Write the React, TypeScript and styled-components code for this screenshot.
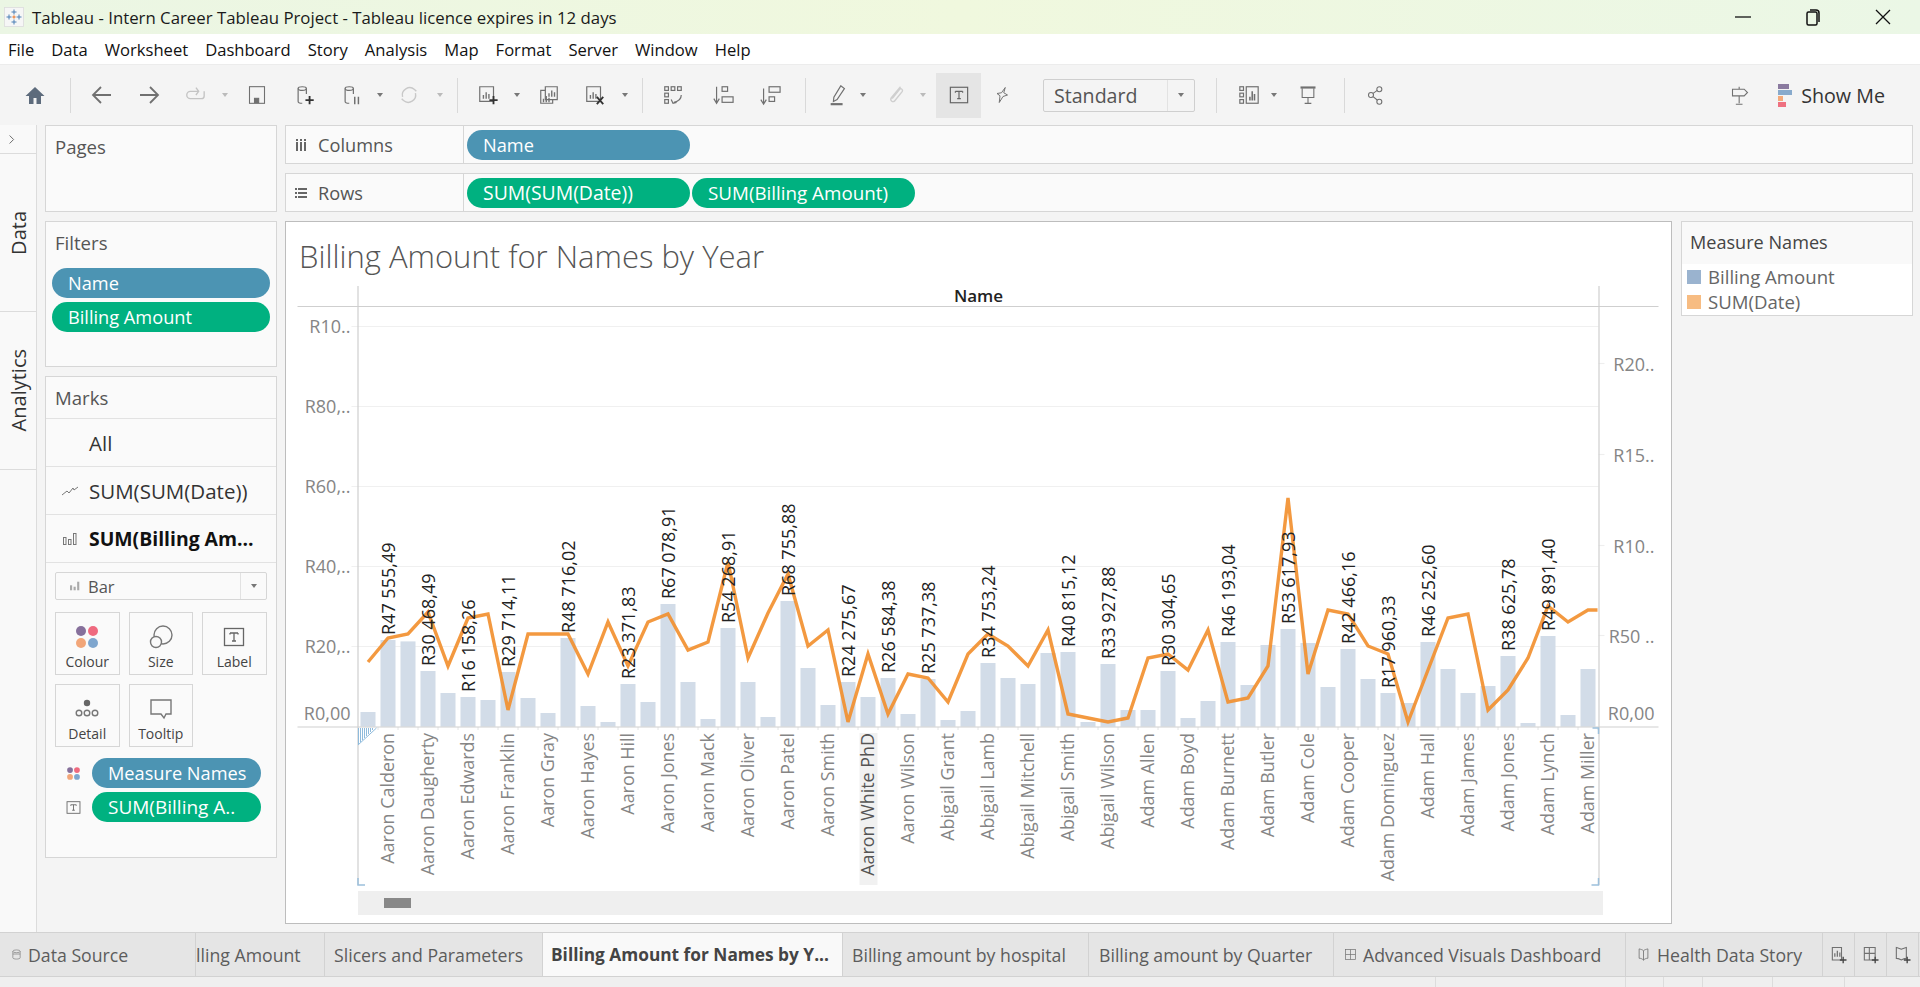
import React from 'react';
import styled, { createGlobalStyle } from 'styled-components';

const UI_FONT = '"Open Sans", "Noto Sans", "Liberation Sans", sans-serif';

const GlobalStyle = createGlobalStyle`
  html, body { margin: 0; padding: 0; height: 100%; overflow: hidden; background: #f4f4f4; }
  * { box-sizing: border-box; }
  body { font-family: ${UI_FONT}; }
`;

/* ---------- window chrome ---------- */

const Page = styled.div`
  width: 1920px;
  height: 987px;
  display: flex;
  flex-direction: column;
  background: #f4f4f4;
`;

const TitleBar = styled.div`
  height: 34px;
  display: flex;
  align-items: center;
  background: linear-gradient(90deg, #ebf6e4 0%, #f0f8de 50%, #ebf7e6 100%);
  padding: 0 2px 0 4px;
  color: #1a1a1a;
  font-size: 16.8px;
`;

const TitleText = styled.span`
  margin-left: 8px;
  flex: 1;
`;

const WindowButton = styled.div`
  width: 70px;
  height: 34px;
  display: flex;
  align-items: center;
  justify-content: center;
`;

const MenuBar = styled.div`
  height: 30px;
  display: flex;
  align-items: center;
  gap: 17px;
  padding-left: 8px;
  background: #fff;
  color: #111;
  font-size: 16.6px;
`;

const Toolbar = styled.div`
  height: 61px;
  display: flex;
  align-items: center;
  background: #f4f4f4;
  padding-right: 35px;
  border-top: 1px solid #ececec;
`;

const ToolIcon = styled.div<{ $ml: number }>`
  width: 28px;
  height: 28px;
  margin-left: ${p => p.$ml}px;
  display: flex;
  align-items: center;
  justify-content: center;
  flex: none;
`;

const Caret = styled.div<{ $ml: number; $off?: boolean }>`
  width: 0;
  height: 0;
  margin-left: ${p => p.$ml + 2}px;
  margin-right: 2px;
  border-left: 3px solid transparent;
  border-right: 3px solid transparent;
  border-top: 4px solid ${p => (p.$off ? '#bbb' : '#777')};
  flex: none;
`;

const ToolSep = styled.div<{ $ml: number }>`
  width: 1px;
  height: 35px;
  margin-left: ${p => p.$ml}px;
  background: #d9d9d9;
  flex: none;
`;

const ActiveTool = styled.div<{ $ml: number }>`
  width: 45px;
  height: 45px;
  margin-left: ${p => p.$ml}px;
  background: #e5e5e5;
  display: flex;
  align-items: center;
  justify-content: center;
  flex: none;
`;

const FitSelect = styled.div<{ $ml: number }>`
  width: 152px;
  height: 33px;
  margin-left: ${p => p.$ml}px;
  display: flex;
  align-items: center;
  border: 1.5px solid #cfcfcf;
  border-radius: 2px;
  color: #555;
  font-size: 19.6px;
  flex: none;
`;

const FitLabel = styled.div`
  flex: 1;
  padding-left: 10px;
`;

const FitArrow = styled.div`
  width: 27px;
  height: 100%;
  border-left: 1px solid #e2e2e2;
  display: flex;
  align-items: center;
  justify-content: center;
`;

const ShowMe = styled.div`
  margin-left: 24px;
  display: flex;
  align-items: center;
  gap: 9px;
  color: #333;
  font-size: 19.7px;
`;

const ToolRight = styled.div`
  margin-left: auto;
  display: flex;
  align-items: center;
`;

/* ---------- workspace ---------- */

const Workspace = styled.div`
  flex: 1;
  min-height: 0;
  display: flex;
`;

const SideStrip = styled.div`
  width: 37px;
  flex: none;
  background: #f9f9f9;
  border-right: 1px solid #dcdcdc;
  color: #333;
  font-size: 20px;
`;

const StripTop = styled.div`
  height: 29px;
  border-bottom: 1px solid #dcdcdc;
  display: flex;
  align-items: center;
  padding-left: 8px;
`;

const StripTab = styled.div`
  height: 158px;
  border-bottom: 1px solid #dcdcdc;
  display: flex;
  align-items: center;
  justify-content: center;
`;

const StripLabel = styled.span`
  writing-mode: vertical-rl;
  transform: rotate(180deg);
`;

const LeftPanel = styled.div`
  width: 232px;
  margin-left: 8px;
  flex: none;
  display: flex;
  flex-direction: column;
  gap: 9px;
  padding-bottom: 74px;
`;

const Card = styled.div<{ $h?: number }>`
  ${p => (p.$h ? `height: ${p.$h}px;` : 'flex: 1;')}
  background: #fafafa;
  border: 1.5px solid #d6d6d6;
  min-height: 0;
`;

const CardTitle = styled.div<{ $h?: number }>`
  padding: 8px 0 0 9px;
  height: ${p => p.$h ?? 43}px;
  color: #555;
  font-size: 18.6px;
`;

const Pill = styled.div<{ $kind: 'dim' | 'mea'; $w?: number; $fs?: number }>`
  height: 30px;
  ${p => (p.$w ? `width: ${p.$w}px;` : '')}
  border-radius: 15px;
  padding-left: 16px;
  display: flex;
  align-items: center;
  color: #fff;
  font-size: ${p => p.$fs ?? 18.2}px;
  white-space: nowrap;
  flex: none;
  background: ${p => (p.$kind === 'dim' ? '#4c94b3' : '#00b180')};
`;

const PillStack = styled.div`
  display: flex;
  flex-direction: column;
  gap: 4px;
  padding: 3px 6px;
`;

const MarkRow = styled.div<{ $bold?: boolean }>`
  height: 48px;
  border-top: 1.5px solid #e2e2e2;
  display: flex;
  align-items: center;
  padding-left: 10px;
  gap: 5px;
  color: ${p => (p.$bold ? '#111' : '#333')};
  font-size: ${p => (p.$bold ? 19.4 : 20.5)}px;
  font-weight: ${p => (p.$bold ? 700 : 400)};
  white-space: nowrap;
`;

const MarkDivider = styled.div`
  border-top: 1.5px solid #e2e2e2;
`;

const MarkIconSlot = styled.div`
  width: 28px;
  display: flex;
  align-items: center;
  justify-content: center;
  flex: none;
`;

const MarkTypeSelect = styled.div`
  height: 28px;
  margin: 9px 9px 0;
  border: 1.5px solid #d6d6d6;
  border-radius: 2px;
  display: flex;
  align-items: center;
  color: #555;
  font-size: 16.5px;
  padding-left: 14px;
  gap: 8px;
`;

const MarkTypeArrow = styled.div`
  margin-left: auto;
  width: 26px;
  height: 100%;
  border-left: 1px solid #e2e2e2;
  display: flex;
  align-items: center;
  justify-content: center;
`;

const MarkButtons = styled.div`
  display: grid;
  grid-template-columns: repeat(3, 64.5px);
  grid-auto-rows: 63px;
  gap: 9px;
  padding: 12px 9px 0;
`;

const MarkButton = styled.div`
  border: 1.5px solid #d6d6d6;
  display: flex;
  flex-direction: column;
  align-items: center;
  color: #444;
  font-size: 14px;
  padding-top: 9px;
`;

const MarkButtonIcon = styled.div`
  height: 30px;
  display: flex;
  align-items: center;
  justify-content: center;
`;

const EncodingList = styled.div`
  padding: 11px 0 0 20px;
  display: flex;
  flex-direction: column;
  gap: 4px;
`;

const EncodingRow = styled.div`
  display: flex;
  align-items: center;
  gap: 11px;
`;

const RightArea = styled.div`
  flex: 1;
  min-width: 0;
  margin: 0 7px 0 8px;
  display: flex;
  flex-direction: column;
  gap: 9px;
  padding-bottom: 8px;
`;

const Shelf = styled.div`
  height: 39px;
  background: #fafafa;
  border: 1.5px solid #d6d6d6;
  display: flex;
  align-items: center;
  flex: none;
`;

const ShelfLabel = styled.div`
  width: 178px;
  height: 100%;
  border-right: 1.5px solid #d6d6d6;
  display: flex;
  align-items: center;
  gap: 11px;
  padding-left: 9px;
  margin-right: 3px;
  color: #555;
  font-size: 18.2px;
  flex: none;
`;

const ShelfPills = styled.div`
  display: flex;
  gap: 2px;
`;

const ViewRow = styled.div`
  flex: 1;
  min-height: 0;
  display: flex;
  gap: 9px;
  align-items: flex-start;
`;

const ViewCard = styled.div`
  width: 1387px;
  height: 703px;
  background: #fff;
  border: 1.5px solid #bdbdbd;
  flex: none;
`;

const ViewTitle = styled.div`
  height: 57.5px;
  padding: 14px 0 0 13px;
  color: #555;
  font-size: 31px;
  font-weight: 300;
  line-height: 40px;
`;

const ChartSvg = styled.svg`
  display: block;
  font-family: ${UI_FONT};
`;

const ScrollTrack = styled.div`
  height: 24px;
  width: 1245px;
  margin: 3px 0 0 71.5px;
  padding: 7px 0 0 26px;
  background: #efefef;
`;

const ScrollThumb = styled.div`
  width: 27px;
  height: 10px;
  background: #888;
`;

const LegendCard = styled.div`
  width: 232px;
  height: 95px;
  background: #fff;
  border: 1.5px solid #d6d6d6;
  flex: none;
`;

const LegendHead = styled.div`
  height: 42px;
  background: #f9f9f9;
  padding: 8px 0 0 8px;
  color: #444;
  font-size: 18.1px;
`;

const LegendRow = styled.div`
  height: 25px;
  padding-left: 5px;
  display: flex;
  align-items: center;
  gap: 7px;
  color: #666;
  font-size: 18.6px;
`;

const Swatch = styled.div<{ $color: string }>`
  width: 14px;
  height: 14px;
  background: ${p => p.$color};
`;

/* ---------- bottom tabs ---------- */

const TabBar = styled.div`
  height: 45px;
  display: flex;
  background: #e5e5e5;
  border-top: 1.5px solid #d2d2d2;
  border-bottom: 1.5px solid #d2d2d2;
  flex: none;
`;

const SheetTab = styled.div<{ $w: number; $active?: boolean; $pad: number }>`
  width: ${p => p.$w}px;
  padding-left: ${p => p.$pad}px;
  display: flex;
  align-items: center;
  gap: 6px;
  flex: none;
  border-right: 1.5px solid #d2d2d2;
  background: ${p => (p.$active ? '#f9f9f9' : 'transparent')};
  color: ${p => (p.$active ? '#444' : '#5c5c5c')};
  font-size: ${p => (p.$active ? 17.3 : 17.7)}px;
  font-weight: ${p => (p.$active ? 700 : 400)};
  white-space: nowrap;
  overflow: hidden;
`;

const NewTab = styled.div`
  width: 32px;
  flex: none;
  border-right: 1.5px solid #d2d2d2;
  display: flex;
  align-items: center;
  justify-content: center;
`;

const StatusBar = styled.div`
  height: 10px;
  display: flex;
  background: #efefef;
  flex: none;
`;

const StatusCell = styled.div<{ $w: number }>`
  width: ${p => p.$w}px;
  border-right: 1px solid #dcdcdc;
  flex: none;
`;

/* ---------- icons ---------- */

const I = ({ s = 22, c = '#707070', w = 1.3, children }: { s?: number; c?: string; w?: number; children: React.ReactNode }) => (
  <svg width={s} height={s} viewBox="0 0 24 24" fill="none" stroke={c} strokeWidth={w}>
    {children}
  </svg>
);

const Bars = ({ x, y, c = '#707070' }: { x: number; y: number; c?: string }) => (
  <path d={`M${x} ${y + 8}v-4M${x + 3} ${y + 8}v-7M${x + 6} ${y + 8}v-5`} stroke={c} strokeWidth="1.5" />
);

const ColourDots = ({ s = 26 }: { s?: number }) => (
  <svg width={s} height={s} viewBox="0 0 26 26">
    <circle cx="7" cy="7" r="5" fill="#86709b" />
    <circle cx="19" cy="7" r="5" fill="#ef6a7f" />
    <circle cx="7" cy="19" r="5" fill="#f2a679" />
    <circle cx="19" cy="19" r="5" fill="#7fa6ce" />
  </svg>
);

const TBox = ({ s = 22, c = '#666' }: { s?: number; c?: string }) => (
  <svg width={s} height={s} viewBox="0 0 22 22" fill="none">
    <rect x="1.5" y="2.5" width="19" height="17" stroke={c} strokeWidth="1.3" />
    <path d="M7 7h8M7 7v1.5M15 7v1.5M11 7v8M9 15h4" stroke={c} strokeWidth="1.3" />
  </svg>
);

const Cylinder = ({ c = '#707070' }: { c?: string }) => (
  <>
    <ellipse cx="9" cy="5" rx="4.5" ry="2" />
    <path d="M4.5 5v14c0 1 2 2 4.5 2M13.5 5v6" stroke={c} />
  </>
);

const Book = () => (
  <I s={15}>
    <path d="M5 3c3 1 5 1 7 3 2-2 4-2 7-3v15c-3 0-5 1-7 3-2-2-4-3-7-3z" />
    <path d="M12 6v15" />
  </I>
);

const tb = {
  home: (
    <I c="none" s={24}>
      <path d="M12 4 2.5 13H6v8h4.5v-6h3v6H18v-8h3.5z" fill="#5d6b7c" />
    </I>
  ),
  back: <I s={24} w={1.8}><path d="M21 12H4M11 4l-8 8 8 8" /></I>,
  fwd: <I s={24} w={1.8}><path d="M3 12h17M13 4l8 8-8 8" /></I>,
  redo: <I c="#c4c4c4" w={1.5}><path d="M16 8H7a4 4 0 0 0 0 8h12a3 3 0 0 0 3-3V8M13 4l3 4-3 4" /></I>,
  save: <I s={20}><rect x="3" y="2" width="18" height="20" /><rect x="9" y="16" width="5" height="5" fill="#707070" /></I>,
  addDs: <I><Cylinder /><path d="M17 13v9M12.5 17.5h9" stroke="#333" strokeWidth="2" /></I>,
  pauseDs: <I><Cylinder /><path d="M15 14v8M19 14v8" strokeWidth="1.6" /></I>,
  refresh: <I c="#c8c8c8" w={1.5}><path d="M5 14a8 8 0 0 1 13-8l2 2M19 10a8 8 0 0 1-13 8l-2-2" /></I>,
  newSheet: <I><path d="M3 3h15v16H3z" /><Bars x={7} y={8} /><path d="M18 13v9M13.5 17.5h9" stroke="#333" strokeWidth="2" /></I>,
  dup: <I><path d="M8 3h13v14H8z" /><path d="M8 7H3v14h13v-4" /><Bars x={12} y={6} /><Bars x={6} y={12} /></I>,
  clear: <I><path d="M3 3h15v16H3z" /><Bars x={7} y={8} /><path d="m14 14 7 8M21 14l-7 8" stroke="#333" strokeWidth="2" /></I>,
  swap: (
    <I>
      <rect x="3" y="3" width="4" height="4" /><rect x="10" y="3" width="4" height="4" /><rect x="17" y="3" width="4" height="4" />
      <rect x="3" y="10" width="4" height="4" /><rect x="3" y="17" width="4" height="4" />
      <path d="M21 12c0 4-3 7-8 8M10 17l2 4 4-1" />
    </I>
  ),
  asc: <I><path d="M5 3v17M2 16l3 5 3-5" /><rect x="11" y="3" width="6" height="5" /><rect x="11" y="14" width="12" height="6" /></I>,
  desc: <I><path d="M5 5v16M2 17l3 5 3-5" /><rect x="11" y="3" width="12" height="6" /><rect x="11" y="14" width="6" height="5" /></I>,
  highlight: <I><path d="M15 2l4 3-8 12-4 2 .5-4.5z" /><path d="M4 22h13" strokeWidth="2.4" /></I>,
  clip: <I c="#cfcfcf" w={1.5}><path d="M18 3 8 15c-2 3 2 6 4 3l8-10c1-2-2-4-3-2l-8 10" /></I>,
  pin: <I s={18}><path d="M15 2l-2 7 5 3-6 2-5 8 1-9-4-3 6-1z" /></I>,
  fit: <I><rect x="2" y="3" width="4" height="4" /><rect x="2" y="10" width="4" height="4" /><rect x="2" y="17" width="4" height="4" /><rect x="9" y="3" width="13" height="18" /><path d="M13 18v-4M15.5 18V8M18 18v-7" strokeWidth="1.7" /></I>,
  pres: <I s={20}><path d="M3 3h18" strokeWidth="2.6" /><path d="M5 4v11h14V4M12 15v7M8 22h8" /></I>,
  share: <I s={20}><circle cx="16" cy="5" r="3" /><circle cx="6" cy="12" r="3" /><circle cx="16" cy="20" r="3" /><path d="m8.5 10 5-3.5M8.5 14l5 4" /></I>,
  sign: <I s={20}><path d="M3 5h14l4 4-4 4H3zM11 13v9M7 23h8M11 2v3" /></I>,
};

/* ---------- chart data ---------- */

const BASE = 726.7;
const barX = (i: number) => 361 + i * 20;
const barMid = (i: number) => 368.5 + i * 20;

const barHeights = [
  14.7, 86.7, 85.3, 55.7, 33.7, 29.7, 26.7, 54.7, 28.7, 13.7, 88.7, 20.7, 4.7, 42.7, 24.7, 122.7, 44.7, 7.7, 98.7, 44.7,
  9.7, 125.7, 58.7, 21.7, 44.7, 29.7, 48.7, 12.7, 47.7, 6.7, 15.7, 63.7, 48.7, 42.7, 73.7, 74.7, 4.7, 62.7, 16.7, 16.7,
  55.7, 8.7, 25.7, 84.7, 41.7, 81.7, 97.7, 83.7, 39.7, 77.7, 47.7, 33.7, 23.7, 84.7, 57.7, 33.7, 40.7, 70.7, 3.7, 90.7,
  11.7, 57.7,
];

const lineY = [
  662, 638, 634, 612, 666, 618, 614, 710, 634, 634, 634, 674, 622, 666, 622, 614, 650, 642, 562, 658,
  613, 574, 646, 630, 722, 654, 714, 674, 678, 702, 654, 634, 646, 666, 630, 714, 718, 722, 718, 658,
  654, 670, 630, 702, 698, 666, 498, 674, 610, 614, 646, 654, 722, 670, 618, 614, 710, 690, 658, 606,
  622, 610,
];

const valueLabels: [number, string][] = [
  [1, 'R47 555,49'], [3, 'R30 468,49'], [5, 'R16 158,26'], [7, 'R29 714,11'], [10, 'R48 716,02'], [13, 'R23 371,83'],
  [15, 'R67 078,91'], [18, 'R54 268,91'], [21, 'R68 755,88'], [24, 'R24 275,67'], [26, 'R26 584,38'], [28, 'R25 737,38'],
  [31, 'R34 753,24'], [35, 'R40 815,12'], [37, 'R33 927,88'], [40, 'R30 304,65'], [43, 'R46 193,04'], [46, 'R53 617,93'],
  [49, 'R42 466,16'], [51, 'R17 960,33'], [53, 'R46 252,60'], [57, 'R38 625,78'], [59, 'R49 891,40'],
];

const names = [
  'Aaron Calderon', 'Aaron Daugherty', 'Aaron Edwards', 'Aaron Franklin', 'Aaron Gray', 'Aaron Hayes', 'Aaron Hill',
  'Aaron Jones', 'Aaron Mack', 'Aaron Oliver', 'Aaron Patel', 'Aaron Smith', 'Aaron White PhD', 'Aaron Wilson',
  'Abigail Grant', 'Abigail Lamb', 'Abigail Mitchell', 'Abigail Smith', 'Abigail Wilson', 'Adam Allen', 'Adam Boyd',
  'Adam Burnett', 'Adam Butler', 'Adam Cole', 'Adam Cooper', 'Adam Dominguez', 'Adam Hall', 'Adam James', 'Adam Jones',
  'Adam Lynch', 'Adam Miller',
];

const leftAxis: [number, string][] = [[333, 'R10..'], [413, 'R80,..'], [493, 'R60,..'], [573, 'R40,..'], [653, 'R20,..'], [720, 'R0,00']];
const rightAxis: [number, string][] = [[371, 'R20..'], [462, 'R15..'], [553, 'R10..'], [643, 'R50 ..'], [720, 'R0,00']];
const grid = [326.5, 406.5, 486.5, 566.5, 646.5];
const rightTicks = [363.5, 454.5, 545.5, 635.5];

const Chart = () => {
  const linePts = lineY.map((y, i) => `${barMid(i)},${y}`).join(' ') + ' 1598,610';
  const hatch = Array.from({ length: 9 }, (_, i) => 359 + i * 2);
  return (
    <ChartSvg width={1384} height={608} viewBox="286.5 280 1384 608">
      <text x="979" y="302" textAnchor="middle" fontSize="17" fontWeight="600" fill="#222">Name</text>

      {grid.map(y => <path key={y} d={`M352 ${y}H1599`} stroke="#f0f0f0" strokeWidth="1.2" />)}
      {rightTicks.map(y => <path key={y} d={`M1599 ${y}h6`} stroke="#eee" strokeWidth="1.2" />)}
      <path d="M298 306.5H1659" stroke="#cfcfcf" strokeWidth="1.2" />
      <path d="M358.5 286V885M1599.5 286V885" stroke="#cfcfcf" strokeWidth="1.2" />

      {barHeights.map((h, i) => (
        <rect key={i} x={barX(i)} y={BASE - h} width="15" height={h} fill="#d2dce8" />
      ))}
      {barHeights.map((_, i) => <path key={i} d={`M${barX(i) + 17.5} 727v3`} stroke="#e4e4e4" />)}
      <path d="M298 727H1659" stroke="#cfcfcf" strokeWidth="1.2" />

      <rect x="860" y="733" width="18" height="152" fill="#f1f1f1" />
      {names.map((n, i) => {
        const x = barMid(i * 2 + 1) + 6;
        return (
          <text key={n} transform={`translate(${x} 733) rotate(-90)`} textAnchor="end" fontSize="17.9" fill={i === 12 ? '#555' : '#858585'}>
            {n}
          </text>
        );
      })}

      <polyline points={linePts} fill="none" stroke="#f28e2b" strokeWidth="3.4" strokeOpacity="0.9" strokeLinejoin="miter" />

      {valueLabels.map(([i, t]) => (
        <text key={t} transform={`translate(${barMid(i) + 6.5} ${BASE - barHeights[i] - 5}) rotate(-90)`} fontSize="18" fill="#222">
          {t}
        </text>
      ))}

      {leftAxis.map(([y, t]) => <text key={t} x="351" y={y} textAnchor="end" fontSize="18" fill="#858585">{t}</text>)}
      {rightAxis.map(([y, t]) => <text key={t + y} x="1655" y={y} textAnchor="end" fontSize="18" fill="#858585">{t}</text>)}

      {hatch.map(x => <path key={x} d={`M${x} 728V${745 - (x - 358)}`} stroke="#8fbbdc" strokeWidth="1" />)}
      <path d="M358.5 745 377 728" stroke="#8fbbdc" />
      <path d="M358.5 878v7h7M1592 885h7v-7M1593 728h6v6" stroke="#9cc0dc" strokeWidth="1.5" fill="none" />
    </ChartSvg>
  );
};

/* ---------- page ---------- */

const menu = ['File', 'Data', 'Worksheet', 'Dashboard', 'Story', 'Analysis', 'Map', 'Format', 'Server', 'Window', 'Help'];

const tabs = [
  { label: 'lling Amount', w: 129, pad: 0 },
  { label: 'Slicers and Parameters', w: 218, pad: 9 },
];

const App: React.FC = () => (
  <Page>
    <GlobalStyle />
    <TitleBar>
      <svg width="20" height="22" viewBox="0 0 24 24">
        <rect x="0.5" y="0.5" width="23" height="23" fill="#f6f6f6" stroke="#ddd" />
        <path d="M12 3v6M9 6h6M12 15v6M9 18h6M6 9v6M3 12h6M18 9v6M15 12h6" stroke="#4a7fb5" strokeWidth="1.2" />
        <path d="M12 10v4M10 12h4" stroke="#e8762d" strokeWidth="1.2" />
      </svg>
      <TitleText>Tableau - Intern Career Tableau Project - Tableau licence expires in 12 days</TitleText>
      <WindowButton>
        <svg width="16" height="16" viewBox="0 0 16 16"><path d="M0 8h16" stroke="#111" strokeWidth="1.3" /></svg>
      </WindowButton>
      <WindowButton>
        <svg width="16" height="18" viewBox="0 0 16 18" fill="none" stroke="#111" strokeWidth="1.5">
          <rect x="2" y="4" width="10" height="13" rx="1.5" />
          <path d="M5 2h6a3 3 0 0 1 3 3v9" />
        </svg>
      </WindowButton>
      <WindowButton>
        <svg width="16" height="16" viewBox="0 0 16 16"><path d="M1 1l14 14M15 1 1 15" stroke="#111" strokeWidth="1.3" /></svg>
      </WindowButton>
    </TitleBar>

    <MenuBar>{menu.map(m => <span key={m}>{m}</span>)}</MenuBar>

    <Toolbar>
      <ToolIcon $ml={21}>{tb.home}</ToolIcon>
      <ToolSep $ml={21} />
      <ToolIcon $ml={17}>{tb.back}</ToolIcon>
      <ToolIcon $ml={19}>{tb.fwd}</ToolIcon>
      <ToolIcon $ml={18}>{tb.redo}</ToolIcon>
      <Caret $ml={11} $off />
      <ToolIcon $ml={13}>{tb.save}</ToolIcon>
      <ToolIcon $ml={20}>{tb.addDs}</ToolIcon>
      <ToolIcon $ml={19}>{tb.pauseDs}</ToolIcon>
      <Caret $ml={9} />
      <ToolIcon $ml={10}>{tb.refresh}</ToolIcon>
      <Caret $ml={12} $off />
      <ToolSep $ml={12} />
      <ToolIcon $ml={16}>{tb.newSheet}</ToolIcon>
      <Caret $ml={10} />
      <ToolIcon $ml={13}>{tb.dup}</ToolIcon>
      <ToolIcon $ml={18}>{tb.clear}</ToolIcon>
      <Caret $ml={11} />
      <ToolSep $ml={12} />
      <ToolIcon $ml={16}>{tb.swap}</ToolIcon>
      <ToolIcon $ml={22}>{tb.asc}</ToolIcon>
      <ToolIcon $ml={19}>{tb.desc}</ToolIcon>
      <ToolSep $ml={21} />
      <ToolIcon $ml={18}>{tb.highlight}</ToolIcon>
      <Caret $ml={6} />
      <ToolIcon $ml={13}>{tb.clip}</ToolIcon>
      <Caret $ml={9} $off />
      <ActiveTool $ml={8}><TBox s={20} /></ActiveTool>
      <ToolIcon $ml={8}>{tb.pin}</ToolIcon>
      <FitSelect $ml={26}>
        <FitLabel>Standard</FitLabel>
        <FitArrow><Caret $ml={0} /></FitArrow>
      </FitSelect>
      <ToolSep $ml={21} />
      <ToolIcon $ml={18}>{tb.fit}</ToolIcon>
      <Caret $ml={6} />
      <ToolIcon $ml={15}>{tb.pres}</ToolIcon>
      <ToolSep $ml={22} />
      <ToolIcon $ml={17}>{tb.share}</ToolIcon>
      <ToolRight>
        <ToolIcon $ml={0}>{tb.sign}</ToolIcon>
        <ShowMe>
          <svg width="14" height="28" viewBox="0 0 14 28">
            <rect x="0" y="3" width="11" height="5" fill="#8a7a9f" />
            <rect x="0" y="9" width="14" height="5" fill="#88aacc" />
            <rect x="0" y="15" width="5" height="5" fill="#f4a97a" />
            <rect x="0" y="21" width="8" height="5" fill="#ee7080" />
          </svg>
          Show Me
        </ShowMe>
      </ToolRight>
    </Toolbar>

    <Workspace>
      <SideStrip>
        <StripTop>
          <svg width="8" height="11" viewBox="0 0 10 12" fill="none"><path d="m2 1 5 5-5 5" stroke="#666" strokeWidth="1.2" /></svg>
        </StripTop>
        <StripTab><StripLabel>Data</StripLabel></StripTab>
        <StripTab><StripLabel>Analytics</StripLabel></StripTab>
      </SideStrip>

      <LeftPanel>
        <Card $h={87}><CardTitle>Pages</CardTitle></Card>
        <Card $h={146}>
          <CardTitle>Filters</CardTitle>
          <PillStack>
            <Pill $kind="dim">Name</Pill>
            <Pill $kind="mea">Billing Amount</Pill>
          </PillStack>
        </Card>
        <Card>
          <CardTitle $h={41}>Marks</CardTitle>
          <MarkRow><MarkIconSlot />All</MarkRow>
          <MarkRow>
            <MarkIconSlot>
              <svg width="16" height="10" viewBox="0 0 16 10" fill="none"><path d="m0 9 5-4 2 2 4-5 1 2 4-3" stroke="#777" /></svg>
            </MarkIconSlot>
            SUM(SUM(Date))
          </MarkRow>
          <MarkRow $bold>
            <MarkIconSlot>
              <svg width="14" height="12" viewBox="0 0 14 12" fill="none" stroke="#777"><rect x="0.5" y="4.5" width="2.5" height="7" /><rect x="5.5" y="6.5" width="2.5" height="5" /><rect x="10.5" y="0.5" width="2.5" height="11" /></svg>
            </MarkIconSlot>
            SUM(Billing Am...
          </MarkRow>
          <MarkDivider />
          <MarkTypeSelect>
            <svg width="10" height="10" viewBox="0 0 14 12" fill="#aaa"><rect x="0" y="5" width="3" height="7" /><rect x="5" y="7" width="3" height="5" /><rect x="10" y="0" width="3" height="12" /></svg>
            Bar
            <MarkTypeArrow><Caret $ml={0} /></MarkTypeArrow>
          </MarkTypeSelect>
          <MarkButtons>
            <MarkButton><MarkButtonIcon><ColourDots /></MarkButtonIcon>Colour</MarkButton>
            <MarkButton>
              <MarkButtonIcon>
                <svg width="24" height="24" viewBox="0 0 24 24" fill="none" stroke="#777" strokeWidth="1.4"><circle cx="14" cy="10" r="9" /><circle cx="7" cy="17" r="5.5" fill="#fafafa" /></svg>
              </MarkButtonIcon>
              Size
            </MarkButton>
            <MarkButton><MarkButtonIcon><TBox /></MarkButtonIcon>Label</MarkButton>
            <MarkButton>
              <MarkButtonIcon>
                <svg width="26" height="22" viewBox="0 0 26 22" fill="none" stroke="#777" strokeWidth="1.4">
                  <circle cx="13" cy="5" r="3.2" fill="#666" stroke="none" />
                  <circle cx="5" cy="15" r="2.8" /><circle cx="13" cy="15" r="2.8" /><circle cx="21" cy="15" r="2.8" />
                </svg>
              </MarkButtonIcon>
              Detail
            </MarkButton>
            <MarkButton>
              <MarkButtonIcon>
                <svg width="24" height="22" viewBox="0 0 24 22" fill="none" stroke="#777" strokeWidth="1.4"><path d="M2 2h20v14h-5l-2 4-3-4H2z" /></svg>
              </MarkButtonIcon>
              Tooltip
            </MarkButton>
          </MarkButtons>
          <EncodingList>
            <EncodingRow>
              <ColourDots s={15} />
              <Pill $kind="dim" $w={169}>Measure Names</Pill>
            </EncodingRow>
            <EncodingRow>
              <TBox s={15} />
              <Pill $kind="mea" $w={169} $fs={19}>SUM(Billing A..</Pill>
            </EncodingRow>
          </EncodingList>
        </Card>
      </LeftPanel>

      <RightArea>
        <Shelf>
          <ShelfLabel>
            <svg width="12" height="12" viewBox="0 0 12 12" fill="#666"><rect x="1" y="3" width="2" height="9" /><rect x="5" y="3" width="2" height="9" /><rect x="9" y="3" width="2" height="9" /><rect x="1" y="0" width="2" height="2" /><rect x="5" y="0" width="2" height="2" /><rect x="9" y="0" width="2" height="2" /></svg>
            Columns
          </ShelfLabel>
          <Pill $kind="dim" $w={223}>Name</Pill>
        </Shelf>
        <Shelf>
          <ShelfLabel>
            <svg width="12" height="12" viewBox="0 0 12 12" fill="#666"><rect x="0" y="1" width="2" height="2" /><rect x="3" y="1" width="9" height="2" /><rect x="0" y="5" width="2" height="2" /><rect x="3" y="5" width="9" height="2" /><rect x="0" y="9" width="2" height="2" /><rect x="3" y="9" width="9" height="2" /></svg>
            Rows
          </ShelfLabel>
          <ShelfPills>
            <Pill $kind="mea" $w={223} $fs={19.4}>SUM(SUM(Date))</Pill>
            <Pill $kind="mea" $w={223} $fs={18.8}>SUM(Billing Amount)</Pill>
          </ShelfPills>
        </Shelf>
        <ViewRow>
          <ViewCard>
            <ViewTitle>Billing Amount for Names by Year</ViewTitle>
            <Chart />
            <ScrollTrack><ScrollThumb /></ScrollTrack>
          </ViewCard>
          <LegendCard>
            <LegendHead>Measure Names</LegendHead>
            <LegendRow><Swatch $color="#9ab3cf" />Billing Amount</LegendRow>
            <LegendRow><Swatch $color="#f7bc82" />SUM(Date)</LegendRow>
          </LegendCard>
        </ViewRow>
      </RightArea>
    </Workspace>

    <TabBar>
      <SheetTab $w={196} $pad={11}>
        <I s={11}><ellipse cx="12" cy="5" rx="8" ry="3" /><path d="M4 5v14c0 4 16 4 16 0V5M4 11h16" /></I>
        Data Source
      </SheetTab>
      {tabs.map(t => <SheetTab key={t.label} $w={t.w} $pad={t.pad}>{t.label}</SheetTab>)}
      <SheetTab $w={300} $pad={8} $active>Billing Amount for Names by Y...</SheetTab>
      <SheetTab $w={246} $pad={9}>Billing amount by hospital</SheetTab>
      <SheetTab $w={245} $pad={10}>Billing amount by Quarter</SheetTab>
      <SheetTab $w={292} $pad={10}>
        <I s={13}><rect x="3" y="3" width="18" height="18" /><path d="M12 3v18M3 12h18" /></I>
        Advanced Visuals Dashboard
      </SheetTab>
      <SheetTab $w={197} $pad={10}><Book />Health Data Story</SheetTab>
      <NewTab><I s={20}><path d="M4 3h11v15H4z" /><Bars x={7} y={6} /><path d="M17 14v8M13 18h8" stroke="#444" strokeWidth="1.6" /></I></NewTab>
      <NewTab><I s={20}><path d="M4 3h13v15H4zM10 3v15M4 10h13" /><path d="M17 14v8M13 18h8" stroke="#444" strokeWidth="1.6" /></I></NewTab>
      <NewTab><I s={20}><path d="M4 3c3 1 4 1 6 2 2-1 3-1 6-2v13c-3 0-4 1-6 2-2-1-3-2-6-2z" /><path d="M17 14v8M13 18h8" stroke="#444" strokeWidth="1.6" /></I></NewTab>
    </TabBar>
    <StatusBar>
      <StatusCell $w={1436} />
      <StatusCell $w={190} />
      <StatusCell $w={38} />
      <StatusCell $w={39} />
      <StatusCell $w={70} />
      <StatusCell $w={72} />
    </StatusBar>
  </Page>
);

export default App;
